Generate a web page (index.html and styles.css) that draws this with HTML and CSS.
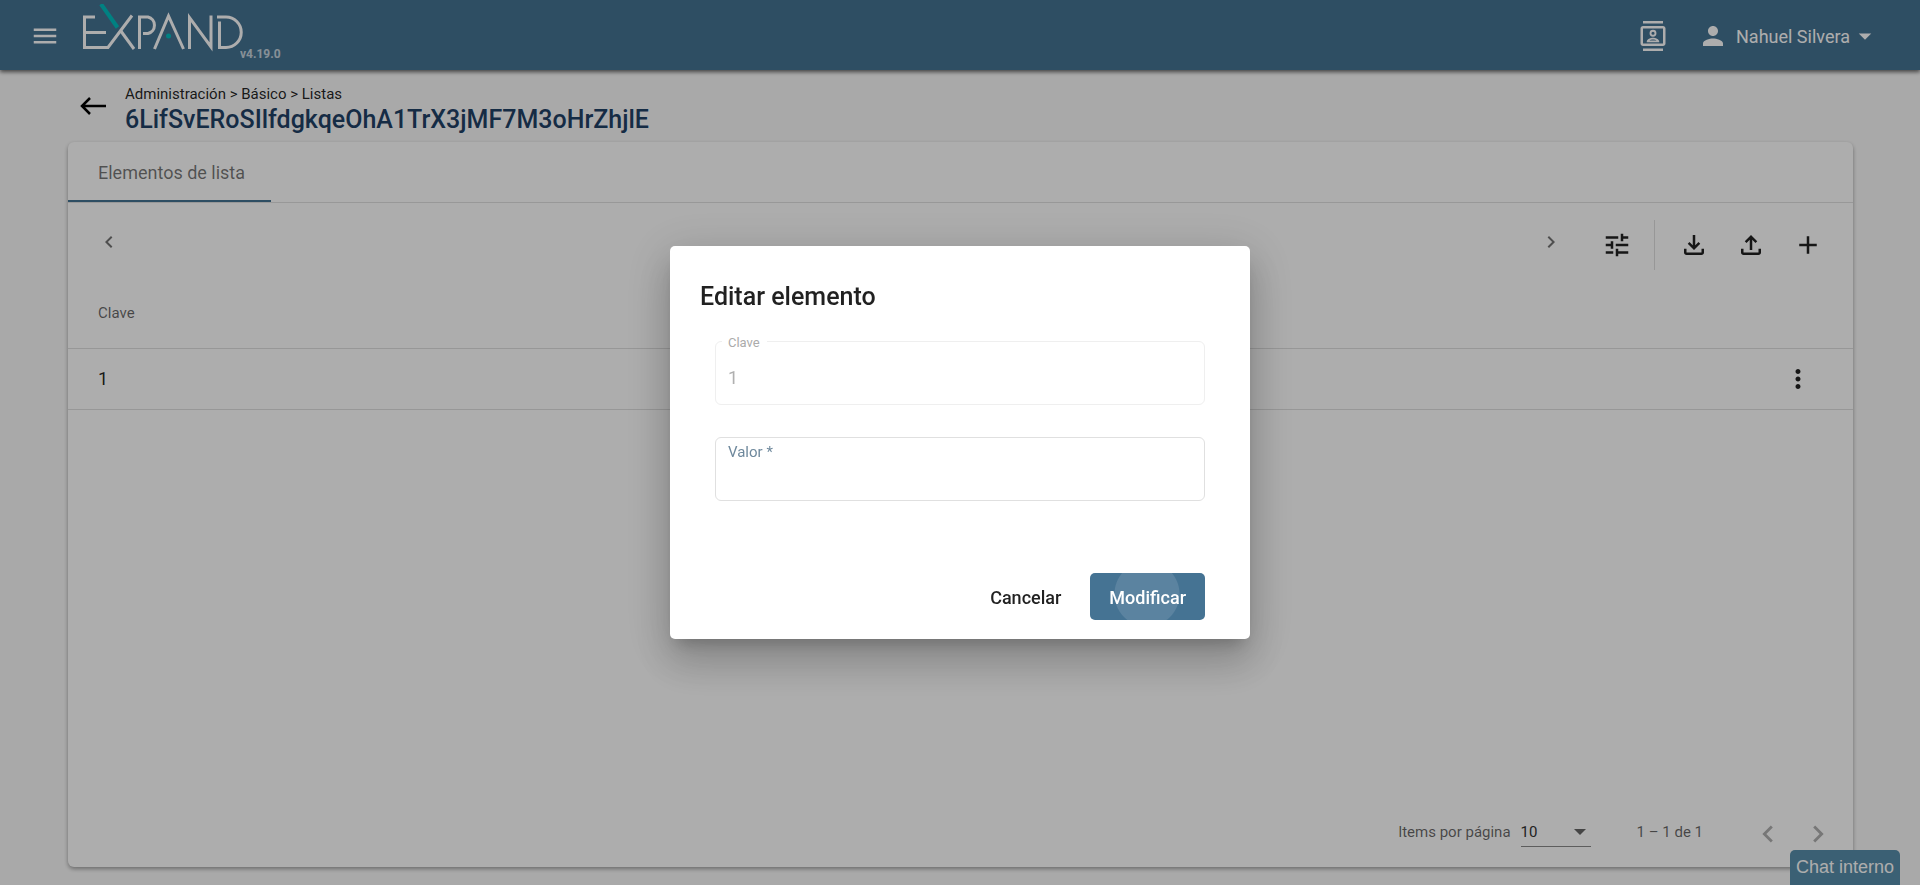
FILE: index.html
```html
<!DOCTYPE html>
<html lang="es">
<head>
<meta charset="utf-8">
<meta name="viewport" content="width=device-width, initial-scale=1">
<title>Expand - Listas</title>
<link rel="stylesheet" href="styles.css">
</head>
<body>
<div class="app">
  <header class="topbar">
    <button class="icon-btn" type="button" aria-label="Menú">
      <svg class="icon" viewBox="0 0 24 24"><path d="M3 18h18v-2H3v2zm0-5h18v-2H3v2zm0-7v2h18V6H3z"/></svg>
    </button>
    <a class="brand" href="#" aria-label="Expand">
      <svg class="logo" viewBox="0 0 162 48" fill="none" stroke="#fff" stroke-width="3">
        <path d="M13 13H2.500V43.500H26L50 11.500M4 28.500H24"/>
        <path d="M38.500 26.500L52 45"/>
        <path d="M19 0L35.500 23.500" stroke="#00bfc0" stroke-width="4"/>
        <path d="M57.500 45V13H66A8.500 8.500 0 0 1 66 29.500H61"/>
        <path d="M72.500 45L86.500 12L101.500 45"/>
        <circle cx="86.500" cy="32" r="2.500" fill="#00bfc0" stroke="none"/>
        <path d="M107.500 45V13.500L129 43V11.500"/>
        <path d="M137.500 17.500V43.500H144A15.250 15.250 0 0 0 144 13H135"/>
      </svg>
      <span class="version">v4.19.0</span>
    </a>
    <div class="account">
      <button class="icon-btn" type="button" aria-label="Contactos">
        <svg class="icon" viewBox="0 0 24 24"><path fill-rule="evenodd" d="M4 0h16v2H4zM4 22h16v2H4zM4 4h16c1.100 0 2 .9 2 2v12c0 1.100-.9 2-2 2H4c-1.100 0-2-.9-2-2V6c0-1.100.9-2 2-2zm0 2v12h16V6zM12 12.500a2.750 2.750 0 1 0 0-5.500 2.750 2.750 0 0 0 0 5.500zm0-4a1.250 1.250 0 1 1 0 2.500 1.250 1.250 0 0 1 0-2.500zM17 16.430c0-2.110-3.250-3.080-5-3.080s-5 .97-5 3.080V17h10zm-7.800-.93c.6-.35 1.700-.68 2.800-.68s2.200.33 2.800.68z"/></svg>
      </button>
      <button class="user" type="button">
        <svg class="icon" viewBox="0 0 24 24"><path d="M12 12c2.210 0 4-1.790 4-4s-1.790-4-4-4-4 1.790-4 4 1.790 4 4 4zm0 2c-2.670 0-8 1.340-8 4v2h16v-2c0-2.660-5.330-4-8-4z"/></svg>
        <span>Nahuel Silvera</span>
        <svg class="icon" viewBox="0 0 24 24"><path d="M7 10l5 5 5-5z"/></svg>
      </button>
    </div>
  </header>

  <main class="page">
    <div class="heading">
      <a class="back" href="#" aria-label="Volver">
        <svg viewBox="0 0 26 18" fill="none" stroke="#000" stroke-width="2.500"><path d="M26 9H2M10 1L2 9l8 8"/></svg>
      </a>
      <div>
        <nav class="crumbs">Administración &gt; Básico &gt; Listas</nav>
        <h1 class="title">6LifSvERoSIlfdgkqeOhA1TrX3jMF7M3oHrZhjlE</h1>
      </div>
    </div>

    <section class="card">
      <div class="tabs"><button class="tab" type="button">Elementos de lista</button></div>
      <div class="toolbar">
        <button class="icon-btn pager" type="button" aria-label="Anterior"><svg class="icon-small" viewBox="0 0 24 24"><path d="M15.410 7.410L14 6l-6 6 6 6 1.410-1.410L10.830 12z"/></svg></button>
        <button class="icon-btn pager pager-next" type="button" aria-label="Siguiente"><svg class="icon-small" viewBox="0 0 24 24"><path d="M10 6L8.590 7.410 13.170 12l-4.580 4.590L10 18l6-6z"/></svg></button>
        <button class="icon-btn" type="button" aria-label="Filtros"><svg class="icon" viewBox="0 0 24 24"><path d="M3 17v2h6v-2H3zM3 5v2h10V5H3zm10 16v-2h8v-2h-8v-2h-2v6h2zM7 9v2H3v2h4v2h2V9H7zm14 4v-2H11v2h10zm-6-4h2V7h4V5h-4V3h-2v6z"/></svg></button>
        <div class="actions">
          <button class="icon-btn" type="button" aria-label="Descargar"><svg class="icon" viewBox="0 0 24 24"><path d="M12 16l-5-5 1.400-1.450 2.600 2.600V4h2v8.150l2.600-2.600L17 11zm-6 4q-.825 0-1.413-.587Q4 18.825 4 18v-3h2v3h12v-3h2v3q0 .825-.587 1.413Q18.825 20 18 20z"/></svg></button>
          <button class="icon-btn" type="button" aria-label="Subir"><svg class="icon" viewBox="0 0 24 24"><path d="M11 16V7.850l-2.600 2.600L7 9l5-5 5 5-1.400 1.450-2.600-2.600V16zm-5 4q-.825 0-1.413-.587Q4 18.825 4 18v-3h2v3h12v-3h2v3q0 .825-.587 1.413Q18.825 20 18 20z"/></svg></button>
          <button class="icon-btn" type="button" aria-label="Agregar"><svg class="icon" viewBox="0 0 24 24"><path d="M19 13h-6v6h-2v-6H5v-2h6V5h2v6h6v2z"/></svg></button>
        </div>
      </div>
      <table class="grid">
        <thead><tr><th scope="col">Clave</th><th class="menu-cell"></th></tr></thead>
        <tbody><tr><td>1</td><td class="menu-cell"><button class="icon-btn" type="button" aria-label="Opciones"><svg class="icon" viewBox="0 0 24 24"><path d="M12 8c1.100 0 2-.9 2-2s-.9-2-2-2-2 .9-2 2 .9 2 2 2zm0 2c-1.100 0-2 .9-2 2s.9 2 2 2 2-.9 2-2-.9-2-2-2zm0 6c-1.100 0-2 .9-2 2s.9 2 2 2 2-.9 2-2-.9-2-2-2z"/></svg></button></td></tr></tbody>
      </table>
      <footer class="paginator">
        <label class="page-label" for="page-size">Items por página</label>
        <div class="select-wrap">
          <select id="page-size"><option>10</option></select>
          <svg class="caret" viewBox="0 0 12 6"><path d="M0 0h12L6 6z"/></svg>
        </div>
        <span class="range">1 – 1 de 1</span>
        <button class="icon-btn page-btn" type="button" aria-label="Página anterior"><svg class="icon-large" viewBox="0 0 24 24"><path d="M15.410 7.410L14 6l-6 6 6 6 1.410-1.410L10.830 12z"/></svg></button>
        <button class="icon-btn page-btn" type="button" aria-label="Página siguiente"><svg class="icon-large" viewBox="0 0 24 24"><path d="M10 6L8.590 7.410 13.170 12l-4.580 4.590L10 18l6-6z"/></svg></button>
      </footer>
    </section>
  </main>
  <button class="chat" type="button">Chat interno</button>
</div>

<div class="backdrop">
  <form class="dialog" role="dialog" aria-modal="true" aria-labelledby="dialog-title">
    <h2 class="dialog-title" id="dialog-title">Editar elemento</h2>
    <div class="fields">
      <div class="field field-disabled">
        <label for="clave">Clave</label>
        <input id="clave" type="text" value="1" disabled>
      </div>
      <div class="field">
        <label for="valor">Valor *</label>
        <input id="valor" type="text" required>
      </div>
    </div>
    <div class="dialog-actions">
      <button class="btn" type="button">Cancelar</button>
      <button class="btn btn-primary" type="submit">Modificar</button>
    </div>
  </form>
</div>
</body>
</html>
```
FILE: styles.css
```css
* {
  box-sizing: border-box;
}

body {
  margin: 0;
  font-family: Roboto, "Liberation Sans", sans-serif;
  color: rgba(0, 0, 0, 0.87);
  background: #fafafa;
}

button,
input,
select {
  font: inherit;
  color: inherit;
}

button {
  padding: 0;
  border: 0;
  background: none;
}

svg {
  display: block;
}

.app {
  display: flex;
  flex-direction: column;
  height: 100vh;
}

.icon {
  width: 30px;
  height: 30px;
  fill: currentColor;
}

.icon-small {
  width: 24px;
  height: 24px;
  fill: currentColor;
}

.icon-large {
  width: 34px;
  height: 34px;
  fill: currentColor;
}

.icon-btn {
  display: flex;
  align-items: center;
  justify-content: center;
}

/* Top bar */
.topbar {
  display: flex;
  align-items: center;
  flex: none;
  height: 70px;
  padding: 2px 40px 0 30px;
  color: #fff;
  background: #457393;
  box-shadow: 0 2px 4px rgba(0, 0, 0, 0.6);
}

.brand {
  display: flex;
  align-items: flex-end;
  margin-left: 22px;
  padding-bottom: 7px;
  color: inherit;
  text-decoration: none;
}

.logo {
  width: 162px;
  height: 48px;
  margin-bottom: 9px;
}

.version {
  margin-left: -4px;
  font-size: 12px;
  line-height: 14px;
  font-weight: 700;
  opacity: 0.7;
}

.account {
  display: flex;
  align-items: center;
  gap: 30px;
  margin-left: auto;
}

.user {
  display: flex;
  align-items: center;
  font-size: 18px;
}

.user span {
  margin-left: 8px;
}

/* Page heading */
.page {
  display: flex;
  flex: 1;
  flex-direction: column;
  padding: 14px 67px 18px 68px;
}

.heading {
  display: flex;
  align-items: flex-start;
  gap: 19px;
  height: 58px;
  padding-left: 12px;
}

.back {
  padding-top: 13px;
}

.back svg {
  width: 26px;
  height: 18px;
}

.crumbs {
  font-size: 15px;
  line-height: 20px;
}

.title {
  margin: 0;
  color: #1f4166;
  font-size: 25px;
  font-weight: 500;
  line-height: 32px;
}

/* List card */
.card {
  display: flex;
  flex: 1;
  flex-direction: column;
  border-radius: 6px;
  background: #fff;
  box-shadow: 0 2px 4px rgba(0, 0, 0, 0.36);
}

.tabs {
  display: flex;
  height: 61px;
  border-bottom: 1px solid #e0e0e0;
}

.tab {
  padding: 2px 26px 0 30px;
  border-bottom: 2px solid #457393;
  color: rgba(0, 0, 0, 0.54);
  font-size: 18px;
}

.toolbar {
  display: flex;
  align-items: center;
  height: 80px;
  padding: 4px 30px 0 29px;
}

.pager {
  padding-bottom: 6px;
  color: #757575;
}

.pager-next {
  margin-right: 39px;
  margin-left: auto;
}

.actions {
  display: flex;
  align-items: center;
  gap: 27px;
  height: 50px;
  margin-left: 22px;
  padding-left: 24px;
  border-left: 1px solid #dfdfdf;
}

.grid {
  width: 100%;
  border-collapse: collapse;
}

.grid th,
.grid td {
  padding: 0 0 0 30px;
  border-bottom: 1px solid #dfdfdf;
  text-align: left;
}

.grid th {
  height: 65px;
  padding-bottom: 5px;
  color: rgba(0, 0, 0, 0.6);
  font-size: 15px;
  font-weight: 400;
}

.grid td {
  height: 61px;
  font-size: 18px;
}

.grid .menu-cell {
  width: 100px;
  padding: 0 40px 0 30px;
}

.paginator {
  display: flex;
  align-items: center;
  justify-content: flex-end;
  height: 66px;
  margin-top: auto;
  padding-right: 18px;
  color: rgba(0, 0, 0, 0.6);
  font-size: 15px;
}

.page-label,
.select-wrap,
.range {
  margin-bottom: 4px;
}

.select-wrap {
  display: flex;
  align-items: center;
  width: 70px;
  height: 30px;
  margin-left: 10px;
  border-bottom: 1px solid #8a8a8a;
}

.select-wrap select {
  flex: 1;
  min-width: 0;
  padding: 0;
  border: 0;
  color: #333;
  background: none;
  appearance: none;
}

.caret {
  width: 12px;
  height: 6px;
  margin-right: 5px;
  fill: #666;
}

.range {
  margin-right: 48px;
  margin-left: 46px;
}

.page-btn {
  color: #b0b0b0;
}

.page-btn + .page-btn {
  margin-left: 16px;
}

.chat {
  position: absolute;
  right: 20px;
  bottom: 0;
  height: 35px;
  padding: 0 6px;
  border-radius: 5px 5px 0 0;
  color: #fff;
  background: #578eab;
  font-family: "Liberation Sans", sans-serif;
  font-size: 18px;
}

/* Dialog */
.backdrop {
  position: fixed;
  inset: 0;
  display: flex;
  align-items: center;
  justify-content: center;
  background: rgba(0, 0, 0, 0.32);
}

.dialog {
  width: 580px;
  padding: 31px 30px 19px;
  border-radius: 5px;
  background: #fff;
  box-shadow:
    0 11px 15px -7px rgba(0, 0, 0, 0.2),
    0 24px 38px 3px rgba(0, 0, 0, 0.14),
    0 9px 46px 8px rgba(0, 0, 0, 0.12);
}

.dialog-title {
  margin: 0;
  font-size: 25px;
  font-weight: 500;
  line-height: 40px;
}

.fields {
  display: flex;
  flex-direction: column;
  gap: 32px;
  padding: 24px 15px 0;
}

.field {
  position: relative;
}

.field input {
  display: block;
  width: 100%;
  height: 64px;
  padding: 8px 12px 0;
  border: 1px solid #e0e0e0;
  border-radius: 6px;
  outline: 0;
  background: #fff;
  font-size: 18px;
}

.field label {
  position: absolute;
  top: 5px;
  left: 13px;
  color: #6f899d;
  font-size: 15px;
  line-height: 20px;
}

.field-disabled input {
  border-color: #efefef;
  color: #b0b0b0;
}

.field-disabled label {
  top: -6px;
  left: 7px;
  padding: 0 7px 0 6px;
  color: #ababab;
  background: #fff;
  font-size: 13px;
  line-height: 16px;
}

.dialog-actions {
  display: flex;
  justify-content: flex-end;
  gap: 10px;
  margin-top: 72px;
  padding: 0 15px;
}

.btn {
  height: 47px;
  padding: 2px 19px 0;
  border-radius: 5px;
  font-size: 18px;
  font-weight: 500;
}

.btn-primary {
  color: #fff;
  background: #457393 radial-gradient(circle 33px at 57px 21px, #5b83a0 32px, transparent 33px);
}
```
